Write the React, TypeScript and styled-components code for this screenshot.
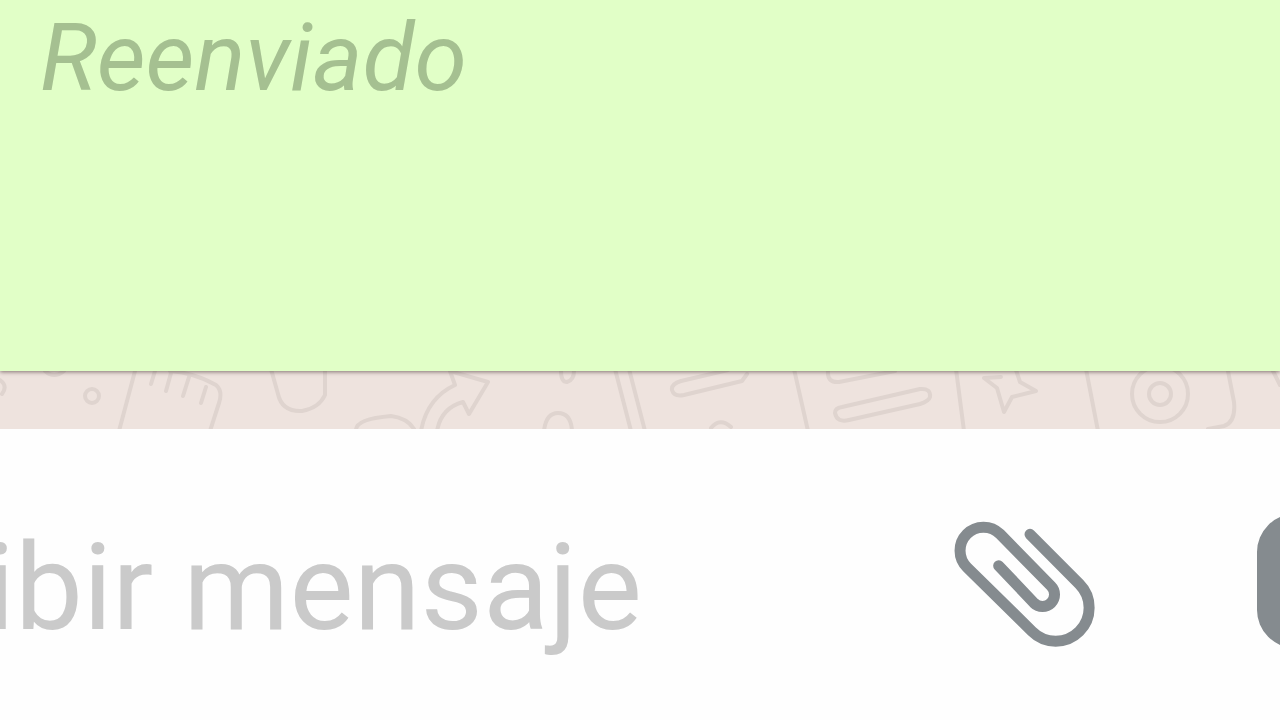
import React from "react";
import styled, { createGlobalStyle } from "styled-components";

const GlobalStyle = createGlobalStyle`
  * { box-sizing: border-box; }
  body {
    margin: 0;
    background: #ffffff;
    font-family: Roboto, "Liberation Sans", sans-serif;
  }
`;

const Screen = styled.main`
  display: flex;
  flex-direction: column;
  min-height: 100vh;
  overflow: hidden;
`;

const Bubble = styled.article`
  position: relative;
  padding: 2px 40px 257px 40px;
  background: #e1ffc7;
  box-shadow: 0 1px 4px rgba(60, 40, 40, 0.6);
`;

const ForwardedLabel = styled.p`
  margin: 0;
  color: #a5c091;
  font-size: 95px;
  font-style: italic;
  line-height: 112px;
`;

const Wallpaper = styled.div`
  height: 58px;
  overflow: hidden;
  background: #eee3de;
`;

const Doodles = styled.svg`
  display: block;
  width: 100%;
  height: 100%;
  fill: none;
  stroke: #dfd4cf;
  stroke-width: 4;
  stroke-linecap: round;
  stroke-linejoin: round;
`;

const Composer = styled.form`
  display: flex;
  flex: 1;
  align-items: flex-start;
  padding-top: 88px;
  background: #fefefe;
`;

const MessageInput = styled.input`
  flex: 1;
  min-width: 0;
  height: 142px;
  margin: 0 0 0 -250px;
  padding: 0;
  border: 0;
  outline: 0;
  background: transparent;
  color: #303030;
  font-family: inherit;
  font-size: 121px;
  line-height: 142px;

  &::placeholder {
    color: #cacaca;
    opacity: 1;
  }
`;

const IconButton = styled.button<{ $width: number }>`
  flex: none;
  width: ${(p) => p.$width}px;
  height: 140px;
  padding: 0;
  border: 0;
  background: transparent;
  color: #858b8f;

  svg {
    display: block;
    width: 100%;
    height: 100%;
    overflow: visible;
  }
`;

const CameraSlot = styled.div`
  flex: none;
  margin: 0 -156px 0 136px;
`;

export default function App() {
  return (
    <Screen>
      <GlobalStyle />
      <Bubble>
        <ForwardedLabel>Reenviado</ForwardedLabel>
      </Bubble>
      <Wallpaper>
        <Doodles viewBox="0 371 1280 58" preserveAspectRatio="xMinYMin slice" aria-hidden="true">
          <path d="M0 380Q8 386 2 394M45 371Q54 379 64 371" />
          <circle cx="92" cy="396" r="7" />
          <path d="M135 371L119 431M155 371L151 384M171 373L166 391M189 377L183 396M206 387L201 403M170 371Q195 373 216 385Q223 391 219 403L210 431" />
          <path d="M271 369L278 394Q282 412 302 411Q319 408 325 395V369" />
          <path d="M356 430Q356 419 391 416Q407 418 414 429" />
          <path d="M421 431Q427 398 455 385L450 371L488 382L469 414L463 402Q441 408 437 431" />
          <path d="M561 371Q561 382 567 382Q574 380 574 371M544 431Q546 413 558 413Q571 413 572 431" />
          <path d="M615 369L631 431M629 369L645 431" />
          <path d="M747 374L742 381L684 395Q674 397 672 390Q671 384 681 381L728 370" />
          <path d="M711 428Q720 417 731 427M794 369L808 431" />
          <path d="M828 371Q827 383 839 382L895 371" />
          <path d="M842 407L920 389Q931 388 930 397Q929 401 920 404L849 420Q837 423 835 413Q835 408 842 407Z" />
          <path d="M956 369L964 431M984 378L997 388L1004 412L1012 397L1036 391L1020 382L1016 370M984 378L1001 377" />
          <path d="M1086 369L1098 431" />
          <circle cx="1160" cy="394" r="11" />
          <circle cx="1160" cy="394" r="28" />
          <path d="M1228 371L1234 402Q1236 422 1224 426L1208 429M1273 371L1280 385" />
        </Doodles>
      </Wallpaper>
      <Composer onSubmit={(e) => e.preventDefault()}>
        <MessageInput type="text" aria-label="Escribir mensaje" placeholder="Escribir mensaje" />
        <IconButton type="button" $width={190} aria-label="Adjuntar">
          <svg viewBox="0 50 570 420" fill="none" aria-hidden="true">
            <path
              d="M300 102L448 251A100 100 0 0 1 306 393L111 201A70 70 0 0 1 210 101L363 257A36 36 0 0 1 312 308L206 196"
              stroke="currentColor"
              strokeWidth="33"
              strokeLinecap="round"
              strokeLinejoin="round"
            />
          </svg>
        </IconButton>
        <CameraSlot>
          <IconButton type="button" $width={180} aria-label="Cámara">
            <svg viewBox="0 0 180 140" aria-hidden="true">
              <path
                fill="currentColor"
                fillRule="evenodd"
                d="M39 -3H137A38 38 0 0 1 175 35V93A38 38 0 0 1 137 131H39A38 38 0 0 1 1 93V35A38 38 0 0 1 39 -3ZM88 28A36 36 0 1 0 88 100A36 36 0 1 0 88 28Z"
              />
            </svg>
          </IconButton>
        </CameraSlot>
      </Composer>
    </Screen>
  );
}
